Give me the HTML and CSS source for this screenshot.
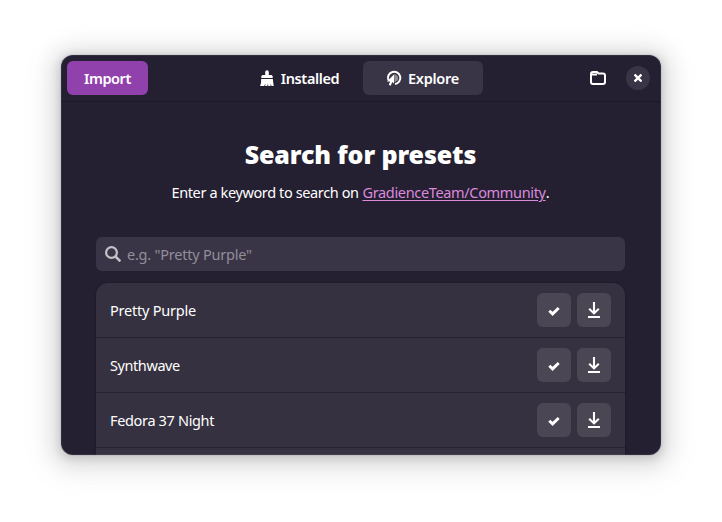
FILE: index.html
```html
<!DOCTYPE html>
<html lang="en">
<head>
<meta charset="utf-8">
<title>Presets</title>
<link rel="stylesheet" href="styles.css">
</head>
<body>
<svg class="sprites" width="0" height="0">
  <symbol id="check" viewBox="0 0 16 16"><path d="M3.300 8.800 6.600 11.900 12.700 6" fill="none" stroke="currentColor" stroke-width="2.900"/></symbol>
  <symbol id="download" viewBox="0 0 16 16"><path d="M8 0v11M3.200 6.800 8 11.400l4.800-4.600" fill="none" stroke="currentColor" stroke-width="2.100"/><path d="M2 14h12v2H2z" fill="currentColor"/></symbol>
</svg>
<main class="window">
  <header class="bar">
    <button class="import"><span class="t-import">Import</span></button>
    <nav class="tabs">
      <button class="tab installed">
        <svg width="16" height="16" viewBox="0 0 16 16" fill="currentColor"><path d="M6.200 5V2a1.800 1.800 0 0 1 3.600 0v3h2.400q1.300 0 1.500 1.500V8H2.300V6.500Q2.500 5 3.800 5z"/><path d="M2.200 9h11.600l.9 7h-2.300l-.5-2.500-.4 2.500H9.300L9 13.500 8.300 16H6.200l.2-2.500L5.200 16H1.100q1.200-3 1.100-7z"/></svg>
        <span class="t-installed">Installed</span>
      </button>
      <button class="tab active">
        <svg width="16" height="16" viewBox="0 0 16 16"><path d="M8 4.200a4.300 4.300 0 0 1 3.800 6L8.500 12.500z" fill="#928d99"/><path d="M2.300 10A6.200 6.200 0 1 1 9 14.100" fill="none" stroke="currentColor" stroke-width="2"/><path d="M8 4.500v9L6.300 12.100 4.700 15.700 2.700 14.800 4.200 11.600H.8z" fill="currentColor"/></svg>
        <span class="t-explore">Explore</span>
      </button>
    </nav>
    <div class="controls">
      <button class="folder" aria-label="Open folder"><svg width="16" height="16" viewBox="0 0 16 16" fill="none" stroke="currentColor" stroke-width="2"><path d="M1 5V4q0-2 2-2h4l1.500 1.500H13q2 0 2 2V12q0 2-2 2H3q-2 0-2-2V4.500h6"/></svg></button>
      <button class="close" aria-label="Close"><svg width="8" height="8" viewBox="0 0 8 8" stroke="currentColor" stroke-width="2.400"><path d="m.5.5 7 7M7.500.5l-7 7"/></svg></button>
    </div>
  </header>
  <section class="content">
    <h1><span class="t-title">Search for presets</span></h1>
    <p><span class="t-enter">Enter a keyword to search on</span> <a class="t-link" href="#">GradienceTeam/Community</a>.</p>
    <div class="search">
      <svg width="16" height="16" viewBox="0 0 16 16" fill="none" stroke="currentColor" stroke-width="2.200"><circle cx="6.500" cy="6.500" r="5.400"/><path d="m10.500 10.500 4.800 4.800" stroke-width="2.500"/></svg>
      <span class="t-hint">e.g. "Pretty Purple"</span>
    </div>
    <ul class="list">
      <li><span class="name t-pp">Pretty Purple</span><button><svg width="16" height="16"><use href="#check"/></svg></button><button><svg width="16" height="16"><use href="#download"/></svg></button></li>
      <li><span class="name t-sw">Synthwave</span><button><svg width="16" height="16"><use href="#check"/></svg></button><button><svg width="16" height="16"><use href="#download"/></svg></button></li>
      <li><span class="name t-fn">Fedora 37 Night</span><button><svg width="16" height="16"><use href="#check"/></svg></button><button><svg width="16" height="16"><use href="#download"/></svg></button></li>
      <li></li>
    </ul>
  </section>
</main>
</body>
</html>
```
FILE: styles.css
```css
* { box-sizing: border-box; }
body { margin: 0; height: 522px; padding: 55px 61px; background: #fff; overflow: hidden; font: 14.500px/20px "Noto Sans", sans-serif; color: #fff; }
.sprites { position: absolute; }
button { display: flex; align-items: center; justify-content: center; margin: 0; padding: 0; border: 0; border-radius: 6px; background: none; color: inherit; font: inherit; }
svg { display: block; flex: none; }
span { white-space: nowrap; }
.window { position: relative; width: 600px; height: 400px; overflow: hidden; border-radius: 12px; background: #241f31; box-shadow: 0 2px 8px 2px rgba(0,0,0,.13), 0 3px 20px 10px rgba(0,0,0,.09), 0 6px 32px 16px rgba(0,0,0,.04), 0 0 0 1px rgba(0,0,0,.05); }
.window::after { content: ""; position: absolute; inset: 0; border-radius: 12px; box-shadow: inset 0 0 0 1px rgba(255,255,255,.07); pointer-events: none; }
.bar { display: grid; grid-template-columns: 1fr 246px 1fr; align-items: center; height: 47px; padding: 0 11px 1px 6px; border-bottom: 1px solid #1c1826; font-weight: 600; }
.import { width: 81px; height: 34px; background: #9141ac; }
.tabs { display: flex; gap: 6px; margin-left: 1px; }
.tab { flex: none; width: 120px; height: 34px; gap: 6px; }
.tab.installed { padding-left: 5px; }
.tab.active { background: #3a3546; }
.controls { display: flex; justify-content: flex-end; align-items: center; gap: 11px; }
.folder { width: 34px; height: 34px; }
.close { width: 24px; height: 24px; border-radius: 50%; background: #3a3546; }
.content { padding: 36px 36px 0 35px; }
h1 { margin: 0; font-size: 25px; line-height: 32px; font-weight: 900; text-align: center; }
p { margin: 12px 0 35px; text-align: center; white-space: nowrap; }
a { color: #dc8add; text-decoration: underline; text-underline-offset: 2px; text-decoration-thickness: 1px; }
.search { display: flex; align-items: center; gap: 6px; height: 34px; padding: 0 9px; border-radius: 6px; background: #3a3546; color: #c4c2c8; }
.t-hint { color: #918e99; letter-spacing: -.22px; }
.t-import { letter-spacing: -.45px; }
.t-installed { letter-spacing: -.38px; }
.t-explore { letter-spacing: -.25px; }
.t-title { letter-spacing: -.1px; }
.t-enter { letter-spacing: -.38px; }
.t-link { letter-spacing: -.34px; }
.t-pp { letter-spacing: -.23px; }
.t-sw { letter-spacing: -.42px; }
.t-fn { letter-spacing: -.34px; }
.list { margin: 12px 0 0; padding: 0; list-style: none; border-radius: 12px; background: #363140; box-shadow: 0 0 0 1px rgba(0,0,0,.06), 0 1px 3px 1px rgba(0,0,0,.07); }
.list li { display: flex; align-items: center; gap: 6px; height: 55px; padding: 0 14px; border-bottom: 1px solid #27222f; }
.list .name { flex: 1; }
.list button { width: 34px; height: 34px; background: #4a4653; }
```
